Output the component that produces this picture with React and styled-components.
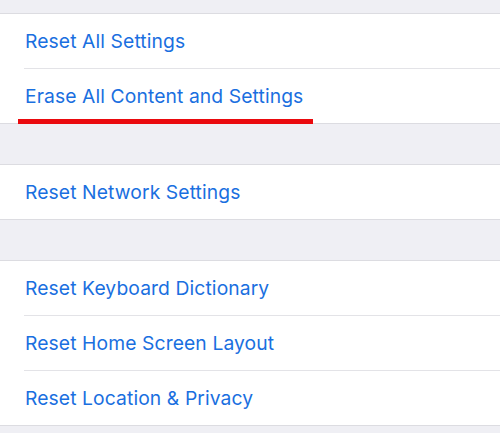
import React from "react";
import styled, { createGlobalStyle } from "styled-components";

const Global = createGlobalStyle`
    html, body {
        margin: 0;
        padding: 0;
        background: #efeff4;
    }
    body {
        font-family: Inter, "Noto Sans", "Liberation Sans", sans-serif;
        -webkit-font-smoothing: antialiased;
    }
`;

const Page = styled.div`
    width: 500px;
    height: 433px;
    overflow: hidden;
    background: #efeff4;
    padding-top: 13px;
    box-sizing: border-box;
`;

const Group = styled.div`
    background: #ffffff;
    border-top: 1px solid #dcdce1;
    border-bottom: 1px solid #dcdce1;
    margin-bottom: 40px;
`;

const Row = styled.div`
    position: relative;
    height: 54px;
    display: flex;
    align-items: center;
    padding-left: 25px;
    font-size: 19.3px;
    color: #1a6fe0;
    letter-spacing: 0.1px;

    & + &::before {
        content: "";
        position: absolute;
        top: -1px;
        left: 24px;
        right: 0;
        height: 1px;
        background: #e3e3e7;
    }
    & + & {
        margin-top: 1px;
    }
`;

const Underline = styled.span`
    position: absolute;
    left: 18px;
    width: 295px;
    bottom: -1px;
    height: 5px;
    background: #ea0a0e;
`;

const groups = [
    ["Reset All Settings", "Erase All Content and Settings"],
    ["Reset Network Settings"],
    ["Reset Keyboard Dictionary", "Reset Home Screen Layout", "Reset Location & Privacy"],
];

export default function App() {
    return (
        <>
            <Global />
            <Page>
                {groups.map((items, g) => (
                    <Group key={g}>
                        {items.map((label) => (
                            <Row key={label}>
                                {label}
                                {label === "Erase All Content and Settings" && <Underline />}
                            </Row>
                        ))}
                    </Group>
                ))}
            </Page>
        </>
    );
}
